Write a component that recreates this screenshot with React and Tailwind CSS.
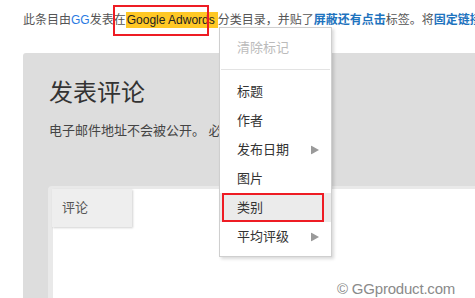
import React from "react";

const font = { fontFamily: '"Liberation Sans", "Noto Sans CJK SC", sans-serif' };

function Arrow() {
  return (
    <svg width="8" height="9" viewBox="0 0 8 9" className="absolute right-[12px] top-1/2 -translate-y-1/2">
      <path d="M0 0 L8 4.5 L0 9 Z" fill="#9a9a9a" />
    </svg>
  );
}

function Item({ label, arrow, active }) {
  return (
    <div className={`relative h-[29px] flex items-center pl-[17px] text-[13px] text-[#333] ${active ? "bg-[#ebebeb]" : ""}`}>
      {label}
      {arrow && <Arrow />}
      {active && <div className="absolute left-[2px] top-0 w-[102px] h-[29px] border-2 border-[#ee1c24]" />}
    </div>
  );
}

export default function App() {
  return (
    <div className="relative w-[475px] h-[298px] overflow-hidden bg-white" style={font}>
      <div className="h-[53px] pl-[23px] pt-[10px] text-[12px] leading-[20px] text-[#555] whitespace-nowrap overflow-hidden">
        {"此条目由"}<span className="text-[#2a7ae2]">GG</span>{"发表在"}<span className="bg-[#ffc825] text-[#222] pl-[1px] pr-[3px] py-[1px]">Google Adwords</span>{"分类目录，并贴了"}<span className="text-[#1e73be] font-bold">屏蔽还有点击</span>{"标签。将"}<span className="text-[#1e73be] font-bold">固定链接</span>
      </div>
      <div className="absolute left-[113px] top-[5px] w-[96px] h-[31px] border-2 border-[#ee1c24]" />

      <div className="ml-[23px] h-[245px] bg-[#dddddd] rounded-tl-[3px] pl-[26px] pt-[24px]">
        <div className="text-[24px] leading-[32px] text-[#333]">发表评论</div>
        <div className="mt-[12px] w-[170px] overflow-hidden text-[13px] leading-[20px] text-[#444] whitespace-nowrap">电子邮件地址不会被公开。 必</div>
        <div className="mt-[45px] -ml-[1px] h-[130px] bg-[#e9e9e9] rounded-tl-[4px] pt-[5px] pl-[5px]">
          <div className="h-full bg-white">
            <div className="-mt-[2px] -ml-[1px] w-[80px] h-[38px] bg-[#eeeeee] shadow-[1px_1px_2px_rgba(0,0,0,0.18)] flex items-center pl-[10px] text-[13px] text-[#555]">
              评论
            </div>
          </div>
        </div>
      </div>

      <div className="absolute left-[219px] top-[27px] w-[113px] bg-white border border-[#cfcfcf] shadow-[2px_2px_3px_rgba(0,0,0,0.15)] pt-[5px] pb-[5px]">
        <div className="h-[29px] flex items-center pl-[17px] text-[13px] text-[#bbbbbb]">清除标记</div>
        <div className="my-[7px] mx-[1px] h-px bg-[#e3e3e3]" />
        <Item label="标题" />
        <Item label="作者" />
        <Item label="发布日期" arrow />
        <Item label="图片" />
        <Item label="类别" active />
        <Item label="平均评级" arrow />
      </div>

      <div className="absolute left-[337px] top-[280px] text-[15px] leading-[18px] text-[#8a8a8a] tracking-[-0.2px]" style={{ fontFamily: '"Liberation Sans", sans-serif', textShadow: "0 0 2px #fff" }}>
        © GGproduct.com
      </div>
    </div>
  );
}
